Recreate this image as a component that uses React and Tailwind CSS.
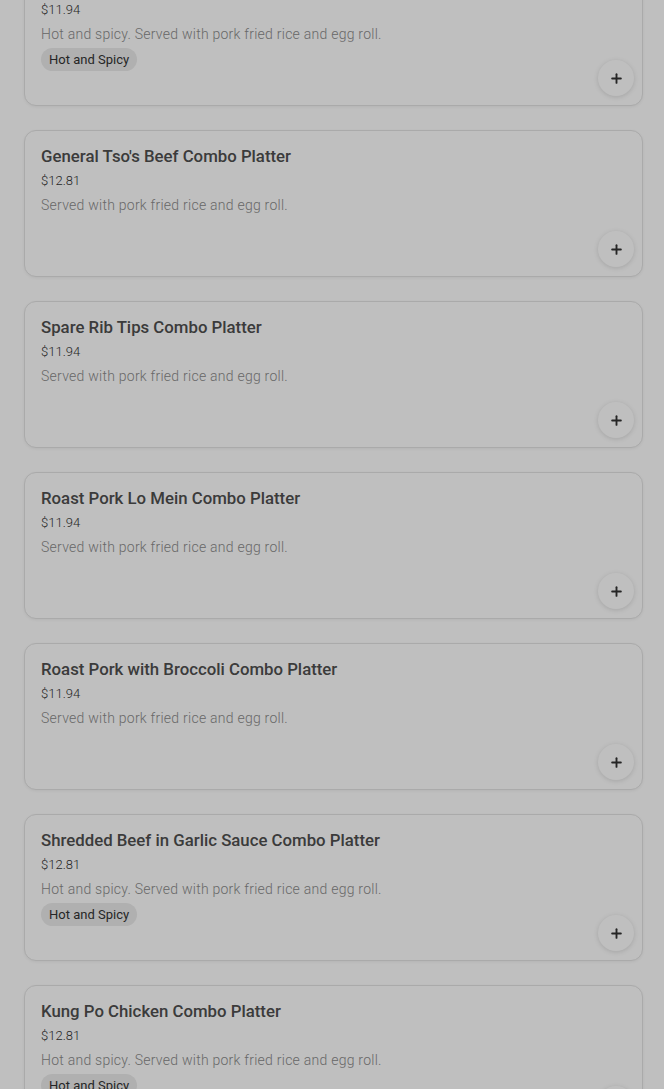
import { Plus } from "lucide-react";

const items = [
  { name: "Hunan Chicken Combo Platter", price: "$11.94", desc: "Hot and spicy. Served with pork fried rice and egg roll.", spicy: true },
  { name: "General Tso's Beef Combo Platter", price: "$12.81", desc: "Served with pork fried rice and egg roll." },
  { name: "Spare Rib Tips Combo Platter", price: "$11.94", desc: "Served with pork fried rice and egg roll." },
  { name: "Roast Pork Lo Mein Combo Platter", price: "$11.94", desc: "Served with pork fried rice and egg roll." },
  { name: "Roast Pork with Broccoli Combo Platter", price: "$11.94", desc: "Served with pork fried rice and egg roll." },
  { name: "Shredded Beef in Garlic Sauce Combo Platter", price: "$12.81", desc: "Hot and spicy. Served with pork fried rice and egg roll.", spicy: true },
  { name: "Kung Po Chicken Combo Platter", price: "$12.81", desc: "Hot and spicy. Served with pork fried rice and egg roll.", spicy: true },
];

// one menu card
const MenuCard = ({ item }) => (
  <div className="relative h-[147px] shrink-0 rounded-xl border border-[#e3e3e3] bg-white px-4 pt-[13px] shadow-[0_1px_3px_rgba(0,0,0,0.06)]">
    <h3 className="text-[16.8px] font-medium leading-6 text-[#4f4f4f]">{item.name}</h3>
    <p className="text-[13px] font-light leading-[26px] text-[#333]">{item.price}</p>
    <p className="text-[14px] font-light leading-[22px] tracking-[0.25px] text-[#8c8c8c]">{item.desc}</p>
    {item.spicy && (
      <span className="mt-[3px] inline-block rounded-full bg-[#ebebeb] px-2 text-[13px] leading-[23px] text-[#333]">
        Hot and Spicy
      </span>
    )}
    <button className="absolute bottom-[9px] right-[8px] flex h-9 w-9 items-center justify-center rounded-full bg-white shadow-[0_1px_5px_rgba(0,0,0,0.14)]">
      <Plus size={15} strokeWidth={3} className="text-[#333]" />
    </button>
  </div>
);

const App = () => {
  return (
    <div className="relative h-[1089px] overflow-hidden bg-white" style={{ fontFamily: "Roboto, 'Noto Sans', sans-serif" }}>
      <div className="-mt-[41px] flex flex-col gap-6 pl-6 pr-[21px]">
        {items.map((item) => (
          <MenuCard key={item.name} item={item} />
        ))}
      </div>
      {/* dimmed backdrop over the page */}
      <div className="absolute inset-0 bg-black/25" />
    </div>
  );
};

export default App;
